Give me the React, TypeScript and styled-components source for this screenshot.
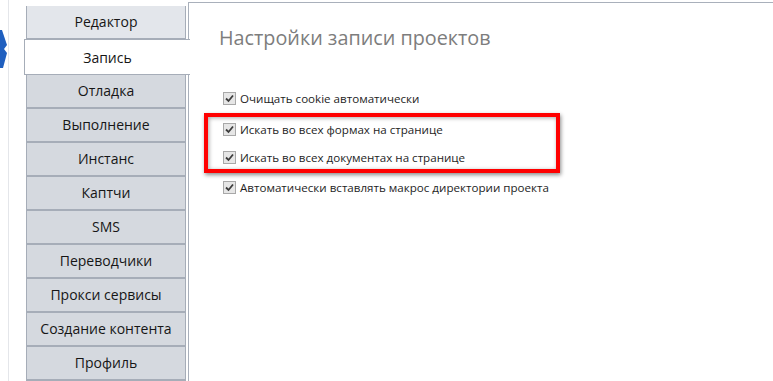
import React from "react";
import styled, { createGlobalStyle } from "styled-components";

const GlobalStyle = createGlobalStyle`
  html, body { margin: 0; padding: 0; background: #ffffff; }
  body { font-family: "Open Sans", "Noto Sans", sans-serif; }
`;

const Page = styled.div`
  display: flex;
  width: 773px;
  height: 381px;
  overflow: hidden;
  background: #ffffff;
`;

const LeftStrip = styled.div`
  width: 24px;
  flex: none;
  position: relative;
  box-sizing: border-box;
  border-left: 8px solid #ffffff;
  box-shadow: inset 1px 0 0 #e4e6ea;
`;

const Logo = styled.svg`
  position: absolute;
  left: -8px;
  top: 30px;
`;

const TabColumn = styled.div`
  width: 166px;
  flex: none;
  display: flex;
  flex-direction: column;
  padding-top: 6px;
  margin-right: -2px;
  position: relative;
  z-index: 2;
`;

const Tab = styled.div<{ $active?: boolean; $light?: boolean }>`
  box-sizing: border-box;
  height: ${(p) => (p.$active ? "36px" : "34px")};
  margin: ${(p) => (p.$active ? "-1px 0 0 0" : "0 4px 0 2px")};
  display: flex;
  align-items: center;
  justify-content: center;
  font-size: 14px;
  color: #161616;
  background: ${(p) => (p.$active ? "#ffffff" : p.$light ? "#e3e6eb" : "#d5d9df")};
  border-left: 1px solid #a6adb8;
  border-right: ${(p) => (p.$active ? "none" : "1px solid #a6adb8")};
  border-top: ${(p) => (p.$active ? "1px solid #a6adb8" : "none")};
  border-bottom: ${(p) => (p.$active ? "1px solid #a6adb8" : "2px solid #a6adb8")};
  padding-bottom: ${(p) => (p.$active ? "0" : "1px")};
`;

const Panel = styled.div`
  flex: 1;
  margin-top: 2px;
  border-top: 1px solid #a9b0bb;
  border-left: 1px solid #a9b0bb;
  display: flex;
  flex-direction: column;
  padding-left: 30px;
  padding-top: 21px;
`;

const Title = styled.h1`
  margin: 0;
  font-weight: 400;
  font-size: 19.8px;
  line-height: 28px;
  color: #7d7d7d;
`;

const OptionList = styled.div`
  display: flex;
  flex-direction: column;
  margin-top: 34px;
  margin-left: 4px;
`;

const Row = styled.label`
  display: flex;
  align-items: center;
  height: 24px;
  gap: 4px;
  font-size: 11.6px;
  color: #1e1e1e;
`;

const Box = styled.span`
  box-sizing: border-box;
  width: 13px;
  height: 13px;
  border: 1px solid #a8a8a8;
  background: #e6e6e6;
  display: flex;
  align-items: center;
  justify-content: center;
  flex: none;
`;

const Highlight = styled.div`
  display: flex;
  flex-direction: column;
  gap: 4px;
  width: 356px;
  box-sizing: border-box;
  margin: 3px 0 2px -19px;
  padding-left: 15px;
  border: 4px solid #ff0000;
  box-shadow: 1px 2px 4px rgba(0, 0, 0, 0.45), inset 1px 1px 4px rgba(0, 0, 0, 0.35);
`;

const tabs = [
  "Редактор",
  "Запись",
  "Отладка",
  "Выполнение",
  "Инстанс",
  "Каптчи",
  "SMS",
  "Переводчики",
  "Прокси сервисы",
  "Создание контента",
  "Профиль",
];

const Check = () => (
  <Box>
    <svg width="9" height="9" viewBox="0 0 9 9">
      <path d="M1 4.5 L3.5 7 L8 1.5" fill="none" stroke="#3c3c3c" strokeWidth="1.8" />
    </svg>
  </Box>
);

const Option = ({ text }: { text: string }) => (
  <Row>
    <Check />
    <span>{text}</span>
  </Row>
);

export default function App() {
  return (
    <>
      <GlobalStyle />
      <Page>
        <LeftStrip>
          <Logo width="8" height="38" viewBox="0 0 8 38">
            <polygon points="0,0 2,0 7,15 4,19 7,23 3,38 0,38" fill="#1f5fbf" />
          </Logo>
        </LeftStrip>
        <TabColumn>
          {tabs.map((t, i) => (
            <Tab key={t} $active={i === 1} $light={i === 0}>
              {t}
            </Tab>
          ))}
        </TabColumn>
        <Panel>
          <Title>Настройки записи проектов</Title>
          <OptionList>
            <Option text="Очищать cookie автоматически" />
            <Highlight>
              <Option text="Искать во всех формах на странице" />
              <Option text="Искать во всех документах на странице" />
            </Highlight>
            <Option text="Автоматически вставлять макрос директории проекта" />
          </OptionList>
        </Panel>
      </Page>
    </>
  );
}
